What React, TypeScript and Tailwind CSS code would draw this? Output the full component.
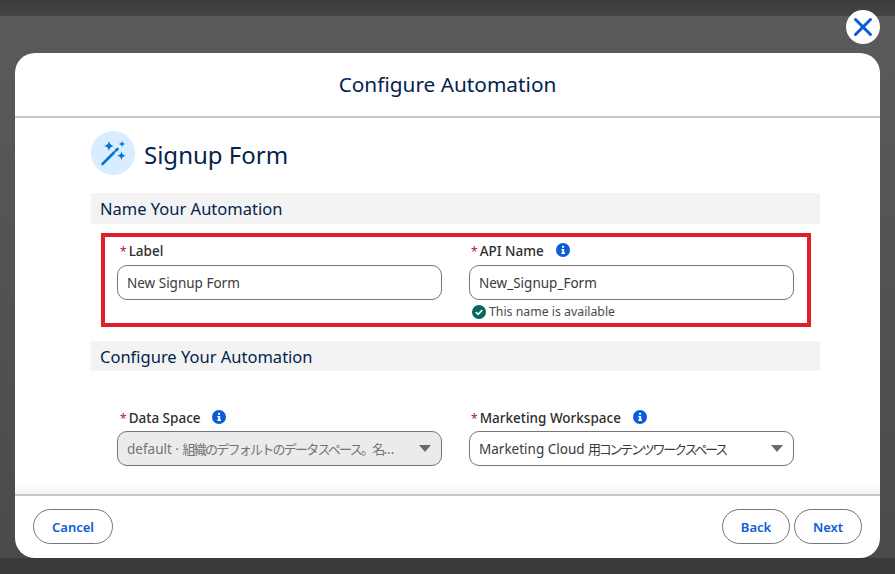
import React from 'react';
import { X } from 'lucide-react';

const font = "font-['Noto_Sans','Noto_Sans_CJK_JP',sans-serif]";

const InfoIcon: React.FC = () => (
    <svg width="14" height="14" viewBox="0 0 14 14" className="flex-shrink-0">
        <circle cx="7" cy="7" r="7" fill="#0b5cd5" />
        <rect x="6" y="2.8" width="2.1" height="2" rx="0.6" fill="#fff" />
        <path d="M5.3 6h2.9v3.6h.8v1.3H5.3V9.6h.9V7.3h-.9z" fill="#fff" />
    </svg>
);

const CheckIcon: React.FC = () => (
    <svg width="14" height="14" viewBox="0 0 14 14" className="flex-shrink-0">
        <circle cx="7" cy="7" r="7" fill="#056764" />
        <path d="M3.8 7.2l2.3 2.2 4.2-4.4" fill="none" stroke="#fff" strokeWidth="1.7" />
    </svg>
);

const WandIcon: React.FC = () => (
    <div className="w-[44px] h-[44px] rounded-full bg-[#d8edff] flex items-center justify-center flex-shrink-0">
        <svg width="28" height="28" viewBox="0 0 28 28">
            <path d="M3.5 25L15 13.5" stroke="#0176d3" strokeWidth="2.6" strokeLinecap="round" fill="none" />
            <path d="M16.8 11.7L18.5 10" stroke="#0176d3" strokeWidth="2.6" strokeLinecap="round" fill="none" />
            <path d="M10 1.8c.7 3.3 1.7 4.4 5 5.2-3.3.8-4.3 1.9-5 5.2-.7-3.3-1.7-4.4-5-5.2 3.3-.8 4.3-1.9 5-5.2z" fill="#0176d3" />
            <path d="M23 1.8c.4 2 1.1 2.8 3.2 3.2-2.1.4-2.8 1.200-3.200 3.200-.4-2-1.100-2.800-3.200-3.200 2.100-.4 2.800-1.200 3.200-3.200z" fill="#0176d3" />
            <path d="M22.500 12.200c.6 3 1.500 3.900 4.500 4.500-3 .6-3.900 1.500-4.500 4.500-.6-3-1.500-3.900-4.500-4.500 3-.6 3.900-1.500 4.500-4.500z" fill="#0176d3" />
        </svg>
    </div>
);

const FieldLabel: React.FC<{ text: string; inset: string; gap?: string }> = ({ text, inset, gap }) => (
    <div className={`flex items-center h-[16px] ${inset}`}>
        <span className="text-[#b0105a] text-[12px] leading-none mr-[2px] pt-[2px]">*</span>
        <span className="text-[13.5px] leading-none font-medium text-[#2e2e2e] pt-[2px]">{text}</span>
        {gap && <span className={`flex ${gap}`}><InfoIcon /></span>}
    </div>
);

const SelectBox: React.FC<{ children: React.ReactNode; disabled?: boolean }> = ({ children, disabled }) => (
    <div className={`h-[35px] rounded-[10px] border border-[#747474] flex items-center justify-between pl-[9px] pr-[10px] text-[13.5px] ${disabled ? 'bg-[#ebebeb] text-[#747474]' : 'bg-white text-[#3a3a3a]'}`}>
        <span className="whitespace-nowrap pt-px">{children}</span>
        <svg width="12" height="7" viewBox="0 0 12 7" className="flex-shrink-0"><path d="M0 0h12L6 7z" fill="#6b6b6b" /></svg>
    </div>
);

const Btn: React.FC<{ text: string; width: string }> = ({ text, width }) => (
    <button className={`${width} h-[35px] rounded-full border border-[#747474] bg-white text-[#0b5cd5] text-[13px] font-semibold flex items-center justify-center pt-[2px]`}>
        {text}
    </button>
);

const SectionBar: React.FC<{ text: string; height: string }> = ({ text, height }) => (
    <div className={`${height} bg-[#f3f3f3] flex items-center pl-[9px] pt-[2px] text-[16.5px] text-[#03234d]`}>{text}</div>
);

const App: React.FC = () => {
    return (
        <div className={`relative w-[895px] h-[574px] overflow-hidden bg-gradient-to-b from-[#5b5b5b] to-[#4a4a4a] flex flex-col ${font}`}>
            <div className="h-[16px] bg-gradient-to-b from-[#3c3c3c] to-[#454545]" />
            <div className="h-[37px]" />
            <div className="mx-[15px] h-[505px] bg-white rounded-[20px] flex flex-col overflow-hidden">
                <div className="h-[65px] flex-shrink-0 border-b-2 border-[#c9c9c9] flex items-center justify-center text-[20.8px] text-[#03234d]">
                    Configure Automation
                </div>
                <div className="relative flex-1 pl-[76px] pr-[60px] pt-[13px]">
                    <div className="flex items-center gap-[9px] h-[44px]">
                        <WandIcon />
                        <span className="text-[24px] text-[#03234d] pt-[4px]">Signup Form</span>
                    </div>
                    <div className="mt-[18px]"><SectionBar text="Name Your Automation" height="h-[31px]" /></div>
                    <div className="mt-[9px] ml-[10px] mr-[9px] h-[94px] border-[4px] border-[#e01f2d] pt-[6px] pl-[12px] pr-[13px] grid grid-cols-2 gap-x-[27px]">
                        <div>
                            <FieldLabel text="Label" inset="pl-[3px]" />
                            <div className="mt-[6px] h-[35px] rounded-[10px] border border-[#747474] flex items-center pl-[9px] pt-px text-[13.5px] text-[#3a3a3a]">New Signup Form</div>
                        </div>
                        <div>
                            <FieldLabel text="API Name" inset="pl-[2px]" gap="ml-[12px] -mt-[2px]" />
                            <div className="mt-[6px] h-[35px] rounded-[10px] border border-[#747474] flex items-center pl-[9px] pt-px text-[13.5px] text-[#3a3a3a]">New_Signup_Form</div>
                            <div className="flex items-center gap-[3px] mt-[5px] pl-[3px] h-[14px] text-[12.3px] text-[#4a4a4a]">
                                <CheckIcon />
                                <span>This name is available</span>
                            </div>
                        </div>
                    </div>
                    <div className="mt-[14px]"><SectionBar text="Configure Your Automation" height="h-[30px]" /></div>
                    <div className="mt-[39px] px-[26px] grid grid-cols-2 gap-x-[27px]">
                        <div>
                            <FieldLabel text="Data Space" inset="pl-[3px]" gap="ml-[11px] -mt-[2px]" />
                            <div className="mt-[5px]">
                                <SelectBox disabled>default · <span className="text-[13px] tracking-[-1.75px]">組織のデフォルトのデータスペース。名</span>...</SelectBox>
                            </div>
                        </div>
                        <div>
                            <FieldLabel text="Marketing Workspace" inset="pl-[2px]" gap="ml-[12px] -mt-[2px]" />
                            <div className="mt-[5px]">
                                <SelectBox>Marketing Cloud <span className="text-[13px] tracking-[-2.25px]">用コンテンツワークスペース</span></SelectBox>
                            </div>
                        </div>
                    </div>
                    <div className="absolute left-0 right-0 bottom-0 h-[12px] bg-gradient-to-b from-white to-[#f4f4f4]" />
                </div>
                <div className="h-[64px] flex-shrink-0 border-t-2 border-[#c9c9c9] flex items-start justify-between pt-[13px] pl-[18px] pr-[18px]">
                    <Btn text="Cancel" width="w-[80px]" />
                    <div className="flex gap-[4px]">
                        <Btn text="Back" width="w-[68px]" />
                        <Btn text="Next" width="w-[68px]" />
                    </div>
                </div>
            </div>
            <div className="h-[16px] bg-[#3a3a3a]" />
            <div className="absolute left-[846px] top-[10px] w-[34px] h-[34px] rounded-full bg-white flex items-center justify-center">
                <X size={30} strokeWidth={2.4} className="text-[#0b5cd5]" />
            </div>
        </div>
    );
};

export default App;
